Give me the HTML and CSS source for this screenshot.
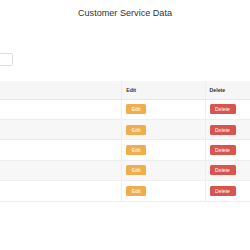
FILE: index.html
```html
<!DOCTYPE html>
<html lang="en">
<head>
  <meta charset="UTF-8">
  <meta name="viewport" content="width=device-width, initial-scale=1.0">
  <title>Customer Service Data</title>
  <link rel="stylesheet" href="styles.css">
</head>
<body>
  <div class="page">
    <h3 class="title">Customer Service Data</h3>

    <!-- Search box -->
    <div class="toolbar">
      <input type="text" class="search" id="search">
    </div>

    <table class="data-table">
      <thead>
        <tr>
          <th class="col-info"></th>
          <th class="col-edit">Edit</th>
          <th class="col-delete">Delete</th>
        </tr>
      </thead>
      <tbody>
        <tr>
          <td></td>
          <td><button class="btn btn-edit">Edit</button></td>
          <td><button class="btn btn-delete">Delete</button></td>
        </tr>
        <tr>
          <td></td>
          <td><button class="btn btn-edit">Edit</button></td>
          <td><button class="btn btn-delete">Delete</button></td>
        </tr>
        <tr>
          <td></td>
          <td><button class="btn btn-edit">Edit</button></td>
          <td><button class="btn btn-delete">Delete</button></td>
        </tr>
        <tr>
          <td></td>
          <td><button class="btn btn-edit">Edit</button></td>
          <td><button class="btn btn-delete">Delete</button></td>
        </tr>
        <tr>
          <td></td>
          <td><button class="btn btn-edit">Edit</button></td>
          <td><button class="btn btn-delete">Delete</button></td>
        </tr>
      </tbody>
    </table>
  </div>
</body>
</html>
```

FILE: styles.css
```css
html, body {
  overflow: hidden;
}

body {
  font-family: 'Liberation Sans', Arial, sans-serif;
  font-size: 5.25px;
  color: #333;
  background: #fff;
  margin: 0;
  padding: 0;
  display: flex;
  flex-direction: column;
  align-items: center; /* wide content spills out on both sides */
}

.page {
  width: 330px;
  flex-shrink: 0;
}

.title {
  font-size: 9.1px;
  font-weight: normal;
  line-height: 1.1;
  color: #333;
  text-align: center;
  margin: 7.5px 0 0;
}

.toolbar {
  margin-top: 35.6px;
}

.search {
  display: block;
  box-sizing: border-box;
  width: 53px;
  height: 13px;
  margin: 0;
  padding: 0 3px;
  border: 1px solid #ddd;
  border-radius: 1.5px;
  background: #fff;
}

.data-table {
  width: 100%;
  margin-top: 15px;
  border-collapse: collapse;
  table-layout: fixed;
}

.col-edit {
  width: 83.3px;
}

.col-delete {
  width: 85px;
}

.data-table th,
.data-table td {
  box-sizing: border-box;
  text-align: left;
  padding: 0 4px;
  vertical-align: middle;
}

.data-table th + th,
.data-table td + td {
  border-left: 1px solid #eee;
}

.data-table th {
  height: 18px;
  font-weight: bold;
  background: #f6f6f6;
  border-bottom: 1px solid #e8e8e8;
}

.data-table td {
  height: 20.4px;
  border-top: 1px solid #eee;
}

.data-table tbody tr:last-child td {
  border-bottom: 1px solid #eee;
}

.data-table tbody tr:nth-child(even) {
  background: #f7f7f7;
}

.btn {
  display: block;
  height: 10px;
  padding: 0 5.5px;
  border: none;
  border-radius: 1.5px;
  font-family: inherit;
  font-size: 5.2px;
  line-height: 10px;
  color: #fff;
  cursor: pointer;
}

.btn-edit {
  background-color: #f0ad4e;
}

.btn-delete {
  background-color: #d9534f;
}
```
